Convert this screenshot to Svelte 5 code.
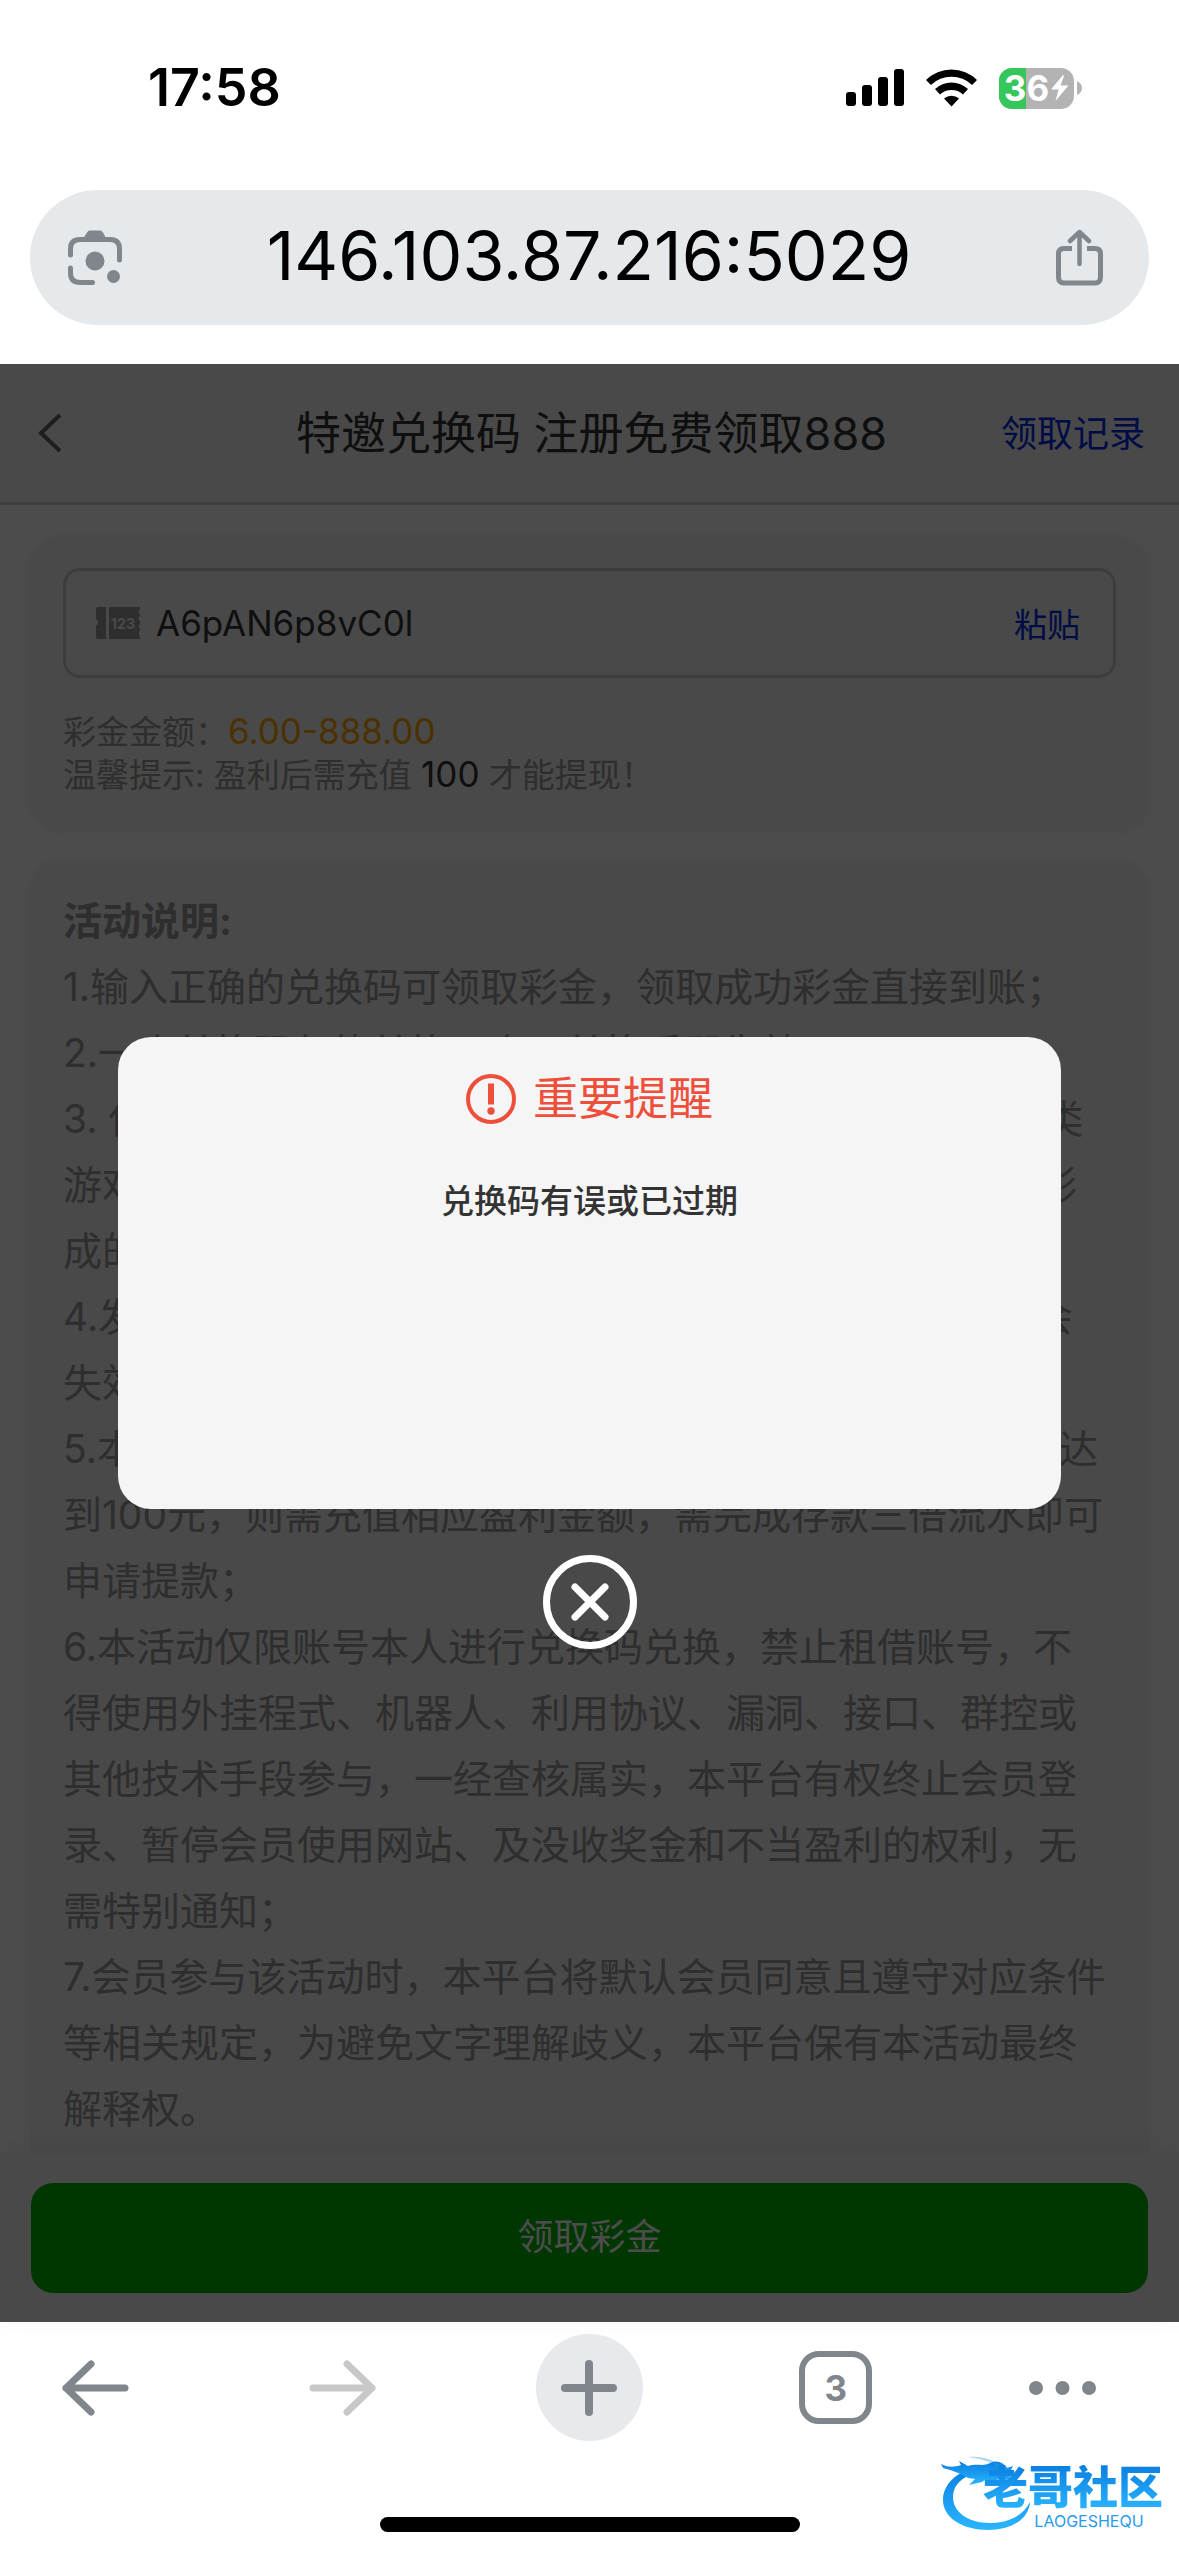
<script>
    let code = 'A6pAN6p8vC0l'
    let address = '146.103.87.216:5029'
    let battery = 36
    let showModal = true

    const rules = [
        '1.输入正确的兑换码可领取彩金，领取成功彩金直接到账；',
        '2.一个兑换码仅能兑换一次，兑换后即失效；',
        '3. 使用兑换码领取的彩金可用于平台内所有棋牌、电子等类\n游戏，禁止利用多账号、作弊工具以及其他不正当手段所形\n成的盈利将不予结算；',
        '4.发放的兑换码有时间限制，请在有效期内使用，逾期将会\n失效，不予补发；',
        '5.本活动彩金需完成100倍流水方可申请提款，盈利金额若达\n到100元，则需充值相应盈利金额，需完成存款三倍流水即可\n申请提款；',
        '6.本活动仅限账号本人进行兑换码兑换，禁止租借账号，不\n得使用外挂程式、机器人、利用协议、漏洞、接口、群控或\n其他技术手段参与，一经查核属实，本平台有权终止会员登\n录、暂停会员使用网站、及没收奖金和不当盈利的权利，无\n需特别通知；',
        '7.会员参与该活动时，本平台将默认会员同意且遵守对应条件\n等相关规定，为避免文字理解歧义，本平台保有本活动最终\n解释权。'
    ]

    async function paste(){
        code = await navigator.clipboard.readText()
    }
</script>

<div class="phone">
    <div class="status">
        <span class="time">17:58</span>
        <div class="status-icons">
            <svg width="58" height="38" viewBox="0 0 58 38">
                <rect x="0" y="23" width="10" height="14" rx="3" />
                <rect x="16" y="16" width="10" height="21" rx="3" />
                <rect x="32" y="8" width="10" height="29" rx="3" />
                <rect x="48" y="0" width="10" height="37" rx="3" />
            </svg>
            <svg width="51" height="38" viewBox="0 0 51 38">
                <path d="M0 11 A36.500 36.500 0 0 1 51 11 L46 16 A29.500 29.500 0 0 0 5 16 Z" />
                <path d="M9 20 A24 24 0 0 1 42 20 L37 25.500 A17 17 0 0 0 14 25.500 Z" />
                <path d="M18 29.500 A11.500 11.500 0 0 1 33 29.500 L25.500 37.500 Z" />
            </svg>
            <div class="battery">
                <div class="battery-body">
                    <div class="battery-fill" style="width: {battery}%"></div>
                    <span>{battery}</span>
                    <svg width="18" height="26" viewBox="0 0 18 26"><path d="M12 0 L0 14.500 H7.500 L4.500 26 L17.500 10.500 H9.500 L13 1 Z" fill="#fff" /></svg>
                </div>
                <svg width="5" height="14" viewBox="0 0 5 14"><path d="M0 0 Q5 2.500 5 7 T0 14 Z" fill="#b3b3b3" /></svg>
            </div>
        </div>
    </div>

    <div class="address">
        <button aria-label="扫描">
            <svg width="56" height="56" viewBox="0 0 56 56" fill="none" stroke="#80868b" stroke-width="5" stroke-linecap="round">
                <path d="M3.500 25 V19 Q3.500 9.500 13 9.500 H43 Q52.500 9.500 52.500 19 V30" />
                <path d="M3.500 38 V43 Q3.500 52.500 13 52.500 H25.500" />
                <path d="M16 9 L20 2.500 Q21 0.500 23 0.500 H33 Q35 0.500 36 2.500 L39.500 9 Z" fill="#80868b" stroke="none" />
                <circle cx="28" cy="31" r="9.500" fill="#80868b" stroke="none" />
                <circle cx="46.500" cy="46.500" r="6.500" fill="#80868b" stroke="none" />
            </svg>
        </button>
        <input type="text" aria-label="地址" bind:value={address} />
        <button aria-label="分享">
            <svg width="50" height="58" viewBox="0 0 50 58" fill="none" stroke="#80868b" stroke-width="5">
                <path d="M17 19.500 H9 Q3.500 19.500 3.500 25 V48 Q3.500 54 9 54 H40 Q45.500 54 45.500 48 V25 Q45.500 19.500 40 19.500 H32" />
                <path d="M24.500 35 V3 M15 12 L24.500 3 L34 12" stroke-linecap="round" stroke-linejoin="round" stroke-width="4.500" />
            </svg>
        </button>
    </div>

    <main class="page">
        <header>
            <button class="back" aria-label="返回">
                <svg width="24" height="40" viewBox="0 0 24 40" fill="none" stroke="#666" stroke-width="4"><path d="M22 2 L3 20 L22 38" /></svg>
            </button>
            <h1>特邀兑换码 注册免费领取888</h1>
            <a href="#records">领取记录</a>
        </header>

        <div class="content">
            <section class="card">
                <label class="code">
                    <svg width="44" height="32" viewBox="0 0 44 32">
                        <path d="M2 0 H10 V32 H2 Q0 32 0 30 V19 A4 4 0 0 0 0 12 V2 Q0 0 2 0 Z" fill="#999" />
                        <path d="M13 0 H44 V2 A3 3 0 0 0 44 7 V9 A3 3 0 0 0 44 14 V17 A3 3 0 0 0 44 22 V24 A3 3 0 0 0 44 29 V32 H13 Z" fill="#999" />
                        <text x="27" y="22" text-anchor="middle" font-size="14" font-weight="700" fill="#f4f4f4">123</text>
                    </svg>
                    <input type="text" aria-label="兑换码" bind:value={code} />
                    <button on:click={paste}>粘贴</button>
                </label>
                <p class="note">彩金金额：<span class="amount">6.00-888.00</span></p>
                <p class="note">温馨提示: 盈利后需充值 <span class="recharge">100</span> 才能提现！</p>
            </section>

            <section class="card rules">
                <h2>活动说明:</h2>
                {#each rules as rule}
                    <p>{rule}</p>
                {/each}
            </section>
        </div>

        <footer>
            <button>领取彩金</button>
        </footer>

        {#if showModal}
            <div class="overlay">
                <div class="modal" role="dialog" aria-labelledby="modal-title">
                    <div class="modal-title">
                        <svg width="50" height="50" viewBox="0 0 50 50">
                            <circle cx="25" cy="25" r="23" fill="none" stroke="#ee4f3b" stroke-width="4" />
                            <path d="M22 9.500 H28 V30.500 H22 Z" fill="#ee4f3b" />
                            <circle cx="25" cy="37" r="3.700" fill="#ee4f3b" />
                        </svg>
                        <h3 id="modal-title">重要提醒</h3>
                    </div>
                    <p>兑换码有误或已过期</p>
                </div>
                <button class="close" aria-label="关闭" on:click={() => showModal = false}>
                    <svg width="94" height="94" viewBox="0 0 94 94" fill="none" stroke="#fff">
                        <circle cx="47" cy="47" r="43.500" stroke-width="7" />
                        <path d="M32 32 L62 62 M62 32 L32 62" stroke-width="7" stroke-linecap="round" />
                    </svg>
                </button>
            </div>
        {/if}
    </main>

    <nav>
        <div class="tools">
            <button aria-label="后退">
                <svg width="67" height="56" viewBox="0 0 67 56" fill="none" stroke="#80868b" stroke-width="7" stroke-linecap="round" stroke-linejoin="round"><path d="M63 28 H4 M29 4 L4 28 L29 52" /></svg>
            </button>
            <button aria-label="前进" disabled>
                <svg width="67" height="56" viewBox="0 0 67 56" fill="none" stroke="#c8c8c8" stroke-width="7" stroke-linecap="round" stroke-linejoin="round"><path d="M4 28 H63 M38 4 L63 28 L38 52" /></svg>
            </button>
            <button class="new-tab" aria-label="新标签页">
                <svg width="56" height="56" viewBox="0 0 56 56" stroke="#80868b" stroke-width="8" stroke-linecap="round"><path d="M28 4 V52 M4 28 H52" /></svg>
            </button>
            <button aria-label="标签页"><span class="tabs">3</span></button>
            <button class="more" aria-label="更多">
                <svg width="67" height="14" viewBox="0 0 67 14" fill="#80868b">
                    <circle cx="7" cy="7" r="7" />
                    <circle cx="33.500" cy="7" r="7" />
                    <circle cx="60" cy="7" r="7" />
                </svg>
            </button>
        </div>
        <div class="home"></div>
        <div class="logo">
            <svg width="92" height="78" viewBox="0 0 92 78">
                <defs>
                    <linearGradient id="logo-blue" x1="0" y1="0" x2="0" y2="1">
                        <stop offset="0" stop-color="#0a7fe0" />
                        <stop offset="1" stop-color="#2ab6ff" />
                    </linearGradient>
                </defs>
                <g fill="url(#logo-blue)">
                    <path d="M33 15 C15 19 2 32 2 47 C2 65 22 77 47 77 C69 77 88 67 89 49 C82 63 67 70 49 70 C27 70 12 59 12 44 C12 32 21 23 37 20 Z" />
                    <path d="M0 11 C8 15 14 14 20 12 L18 8 L27 13 C37 10 42 14 49 10 C56 7 62 9 66 15 L72 13 L69 19 L60 20 L71 24 L69 28 L59 25 C53 31 46 24 41 29 L28 32 L34 26 L27 25 C20 21 14 18 2 15 Z" />
                    <path d="M27 4 C40 3 50 6 62 13 L72 15 L62 17 C50 8 40 6 27 4 Z" opacity=".35" />
                </g>
            </svg>
            <div class="logo-text">
                <strong>老哥社区</strong>
                <small>LAOGESHEQU</small>
            </div>
        </div>
    </nav>
</div>

<style>
    :global(body){
        background-color: #fff;
    }
    .phone{
        display: flex;
        flex-direction: column;
        min-height: 100vh;
        font-family: Inter, "Noto Sans CJK SC", sans-serif;
        color: #333;
    }
    button{
        padding: 0;
        border: 0;
        background: none;
        font: inherit;
        color: inherit;
    }
    input{
        flex: 1;
        min-width: 0;
        padding: 0;
        border: 0;
        outline: 0;
        background: none;
        font: inherit;
        color: inherit;
    }
    svg{
        display: block;
        flex: none;
    }
    h1, h2, h3, p{
        margin: 0;
        font-weight: 400;
    }

    .status{
        display: flex;
        align-items: center;
        justify-content: space-between;
        padding: 58px 97px 72px 148px;
        color: #000;
    }
    .time{
        font-size: 52px;
        line-height: 60px;
        font-weight: 600;
    }
    .status-icons{
        display: flex;
        align-items: center;
        gap: 22px;
    }
    .battery{
        display: flex;
        align-items: center;
        gap: 3px;
    }
    .battery-body{
        position: relative;
        display: flex;
        align-items: center;
        justify-content: center;
        gap: 2px;
        width: 75px;
        height: 41px;
        border-radius: 13px;
        overflow: hidden;
        background-color: #b3b3b3;
        color: #fff;
        font-size: 35px;
        font-weight: 700;
    }
    .battery-body span, .battery-body svg{
        position: relative;
    }
    .battery-fill{
        position: absolute;
        left: 0;
        top: 0;
        bottom: 0;
        background-color: #35c759;
    }

    .address{
        display: flex;
        align-items: center;
        margin: 0 30px 39px;
        padding: 0 44px 0 37px;
        height: 135px;
        border-radius: 68px;
        background-color: #e6e9ec;
        color: #000;
        font-size: 68px;
    }
    .address input{
        padding-bottom: 6px;
        text-align: center;
    }

    .page{
        position: relative;
        flex: 1;
        display: flex;
        flex-direction: column;
        background-color: #fff;
    }
    header{
        display: grid;
        grid-template-columns: 1fr auto 1fr;
        align-items: center;
        height: 138px;
        padding: 0 34px 0 38px;
        border-bottom: 3px solid #cbcbcb;
        background-color: #f4f4f4;
    }
    .back{
        justify-self: start;
    }
    h1, header a{
        padding-bottom: 5px;
    }
    h1{
        font-size: 45px;
    }
    header a{
        justify-self: end;
        font-size: 36px;
        color: #0029e6;
        text-decoration: none;
    }
    .content{
        flex: 1;
        display: flex;
        flex-direction: column;
        gap: 28px;
        padding: 32px 30px 0;
    }
    .card{
        padding: 31px 33px 36px;
        border-radius: 30px;
        background-color: #f4f4f4;
        box-shadow: 0 0 20px rgba(0, 0, 0, .04);
    }
    .code{
        display: flex;
        align-items: center;
        gap: 16px;
        height: 104px;
        margin-bottom: 32px;
        padding: 0 33px 0 30px;
        border: 3px solid #cbcbcb;
        border-radius: 17px;
        font-size: 35px;
    }
    .code button{
        font-size: 33px;
        color: #0029e6;
    }
    .note{
        font-size: 33px;
        line-height: 42px;
        color: #999;
    }
    .amount, .recharge{
        font-size: 35px;
    }
    .amount{
        color: #ffa500;
    }
    .recharge{
        color: #333;
    }
    .rules{
        flex: 1;
        padding: 28px 33px 10px;
        border-radius: 30px 30px 0 0;
        font-size: 39px;
        line-height: 66px;
        color: #999;
    }
    .rules h2{
        font-size: 39px;
        font-weight: 700;
    }
    .rules p{
        white-space: pre-line;
    }
    footer{
        position: relative;
        padding: 30px 31px 29px;
        background-color: #f4f4f4;
        box-shadow: 0 -4px 24px rgba(0, 0, 0, .06);
    }
    footer button{
        display: block;
        width: 100%;
        height: 110px;
        padding-bottom: 8px;
        border-radius: 22px;
        background-color: #00b400;
        color: #fff;
        font-size: 36px;
    }

    .overlay{
        position: absolute;
        inset: 0;
        display: flex;
        flex-direction: column;
        align-items: center;
        justify-content: center;
        gap: 46px;
        background-color: rgba(0, 0, 0, .7);
    }
    .modal{
        box-sizing: border-box;
        width: 80%;
        min-height: 472px;
        padding: 30px;
        border-radius: 33px;
        background-color: #f5f5f5;
        text-align: center;
    }
    .modal-title{
        display: flex;
        align-items: center;
        justify-content: center;
        gap: 17px;
        margin-bottom: 46px;
        color: #ee4f3b;
    }
    h3{
        font-size: 45px;
        line-height: 64px;
    }
    .modal p{
        font-size: 33px;
        line-height: 48px;
        font-weight: 500;
    }

    nav{
        position: relative;
        display: flex;
        flex-direction: column;
        align-items: center;
        gap: 76px;
        padding: 12px 0 24px;
    }
    .tools{
        box-sizing: border-box;
        display: flex;
        justify-content: space-between;
        width: 100%;
        padding: 0 83px 0 42px;
    }
    .tools button{
        display: flex;
        align-items: center;
        justify-content: center;
        width: 107px;
        height: 107px;
        border-radius: 50%;
    }
    .tools .new-tab{
        background-color: #e8e9ed;
    }
    .tools .more{
        width: 67px;
    }
    .tabs{
        display: flex;
        align-items: center;
        justify-content: center;
        width: 61px;
        height: 61px;
        border: 6px solid #80868b;
        border-radius: 20px;
        color: #80868b;
        font-size: 35px;
        font-weight: 700;
    }
    .home{
        width: 420px;
        height: 15px;
        border-radius: 8px;
        background-color: #000;
    }
    .logo{
        position: absolute;
        right: 16px;
        bottom: 25px;
        display: flex;
    }
    .logo-text{
        display: flex;
        flex-direction: column;
        align-items: center;
        justify-content: flex-end;
        margin-left: -50px;
    }
    .logo-text strong{
        font-size: 45px;
        line-height: 46px;
        font-weight: 900;
        background: linear-gradient(#0a7fe0, #2ab6ff);
        background-clip: text;
        color: transparent;
    }
    .logo-text small{
        margin-left: 32px;
        font-size: 16px;
        line-height: 20px;
        color: #2a9bea;
    }
</style>
